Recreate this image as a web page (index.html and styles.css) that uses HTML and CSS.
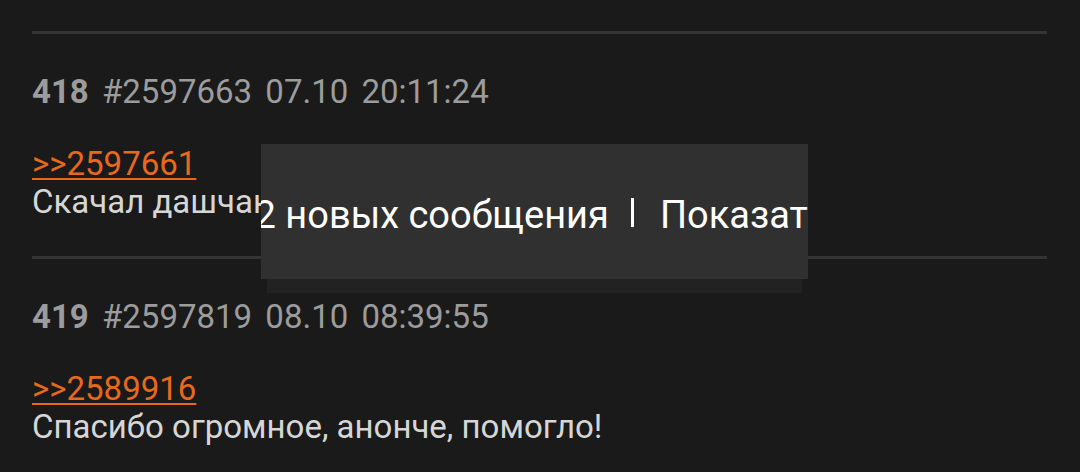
FILE: index.html
```html
<!DOCTYPE html>
<html lang="ru">
<head>
    <meta charset="UTF-8">
    <title>Тред</title>
    <link rel="stylesheet" href="styles.css">
</head>
<body>
<div class="thread">
    <div class="post">
        <div class="post-head">
            <span class="post-num">418</span>
            <span class="post-id">#2597663</span>
            <span class="post-date">07.10 20:11:24</span>
        </div>
        <a class="reply-link" href="#">&gt;&gt;2597661</a>
        <div class="post-text">Скачал дашчак, теперь всё работает</div>
    </div>
    <div class="post">
        <div class="post-head">
            <span class="post-num">419</span>
            <span class="post-id">#2597819</span>
            <span class="post-date">08.10 08:39:55</span>
        </div>
        <a class="reply-link" href="#">&gt;&gt;2589916</a>
        <div class="post-text">Спасибо огромное, анонче, помогло!</div>
    </div>
</div>

<div class="snackbar">
    <span class="snack-msg">2 новых сообщения</span>
    <span class="snack-sep"></span>
    <span class="snack-action">Показать</span>
</div>
</body>
</html>
```

FILE: styles.css
```css
* {
    margin: 0;
    padding: 0;
    box-sizing: border-box;
}
html, body {
    height: 100%;
    overflow: hidden;
}
body {
    background: #1a1a1a;
    font-family: Roboto, "Noto Sans", sans-serif;
    font-size: 33px;
    line-height: 38px;
}
.thread {
    padding: 31px 33px 0 32px;
}
.post {
    border-top: 3px solid #343434;
    padding-top: 39px;
    padding-bottom: 35px;
}
.post-head {
    color: #9c9c9c;
    white-space: nowrap;
    word-spacing: 5px;
    margin-bottom: 34px;
}
.post-num {
    font-weight: 700;
}
.reply-link {
    display: inline-block;
    color: #e8691d;
    text-decoration: underline;
    text-decoration-thickness: 2px;
    text-underline-offset: 3px;
}
.post-text {
    color: #d6d6d6;
    white-space: nowrap;
}

/* всплывашка поверх треда */
.snackbar {
    position: absolute;
    left: 261px;
    top: 144px;
    width: 547px;
    height: 135px;
    background: #303030;
    box-shadow: 0 20px 0 -6px #222;
    display: flex;
    align-items: center;
    justify-content: center;
    overflow: hidden;
    white-space: nowrap;
    color: #fff;
    font-size: 38px;
    line-height: 44px;
    padding-top: 6px;
    padding-left: 14px;
}
.snack-msg, .snack-action {
    flex: none;
}
.snack-sep {
    flex: none;
    width: 3px;
    height: 29px;
    background: #fff;
    margin: 0 26px 4px 22px;
}
```
